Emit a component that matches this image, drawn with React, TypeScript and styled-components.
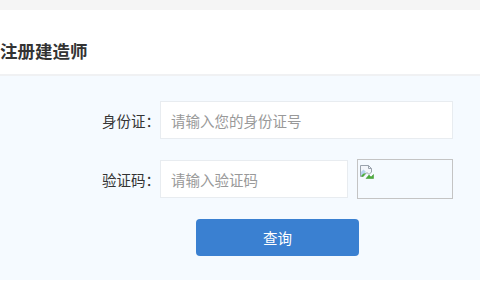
import React from 'react';
import styled, { createGlobalStyle } from 'styled-components';

const GlobalStyle = createGlobalStyle`
  html, body {
    margin: 0;
    padding: 0;
    background: #ffffff;
    font-family: "Microsoft YaHei", "Noto Sans CJK SC", "Noto Sans", sans-serif;
    overflow: hidden;
  }
`;

const Page = styled.div`
  width: 480px;
  height: 300px;
  background: #ffffff;
  border-top: 10px solid #f5f5f5;
  box-sizing: border-box;
`;

const Header = styled.div`
  height: 64px;
  display: flex;
  align-items: center;
  border-bottom: 2px solid #f0f1f3;
  overflow: hidden;
`;

const Title = styled.h2`
  margin: 0 0 0 -35px;
  padding-top: 17px;
  font-size: 17.5px;
  font-weight: bold;
  color: #333333;
  white-space: nowrap;
`;

const FormArea = styled.div`
  background: #f5faff;
  padding: 25px 0 24px;
  display: flex;
  flex-direction: column;
  gap: 20px;
`;

const Row = styled.div`
  display: flex;
  align-items: center;
`;

const Label = styled.label`
  width: 160px;
  text-align: right;
  font-size: 14.5px;
  color: #333333;
  box-sizing: border-box;
`;

const Input = styled.input<{ $w: number }>`
  width: ${(p) => p.$w}px;
  height: 38px;
  box-sizing: border-box;
  border: 1px solid #e8ecf0;
  background: #ffffff;
  padding: 0 10px;
  font-size: 14.5px;
  font-family: inherit;
  color: #333;
  outline: none;
  &::placeholder {
    color: #999999;
  }
`;

const CodeImage = styled.div`
  margin-left: 9px;
  width: 96px;
  height: 40px;
  box-sizing: border-box;
  border: 1px solid #c4c4c4;
  padding: 1px 0 0 1px;
`;

const ButtonRow = styled.div`
  padding-left: 196px;
`;

const QueryButton = styled.button`
  width: 163px;
  height: 37px;
  border: none;
  border-radius: 4px;
  background: #3a80d1;
  color: #ffffff;
  font-size: 14.5px;
  font-family: inherit;
  cursor: pointer;
`;

const BrokenImage = () => (
  <svg width="16" height="16" viewBox="0 0 16 16">
    <path d="M1.5 1.5 H9.5 L12.5 4.5 V8 L10 10.5 L8 8.5 L4 12.5 H1.5 Z" fill="#f3f6fb" stroke="#9aa3ad" strokeWidth="1" />
    <path d="M9.5 1.5 V4.5 H12.5" fill="none" stroke="#9aa3ad" strokeWidth="1" />
    <path d="M2 8 L4.5 5.5 L7 8 L3 12 H2 Z" fill="#b8d3f0" />
    <path d="M2 12 Q4 9 7 9 L4 13 Z" fill="#4caf3a" />
    <path d="M7 14.5 L10 11 L12 13 L14.5 10.5 V14.5 Z" fill="#4caf3a" stroke="#3b8e2c" strokeWidth="0.5" />
  </svg>
);

export default function App() {
  return (
    <>
      <GlobalStyle />
      <Page>
        <Header>
          <Title>查询注册建造师</Title>
        </Header>
        <FormArea>
          <Row>
            <Label>身份证：</Label>
            <Input $w={293} placeholder="请输入您的身份证号" />
          </Row>
          <Row>
            <Label>验证码：</Label>
            <Input $w={188} placeholder="请输入验证码" />
            <CodeImage>
              <BrokenImage />
            </CodeImage>
          </Row>
          <ButtonRow>
            <QueryButton>查询</QueryButton>
          </ButtonRow>
        </FormArea>
      </Page>
    </>
  );
}
